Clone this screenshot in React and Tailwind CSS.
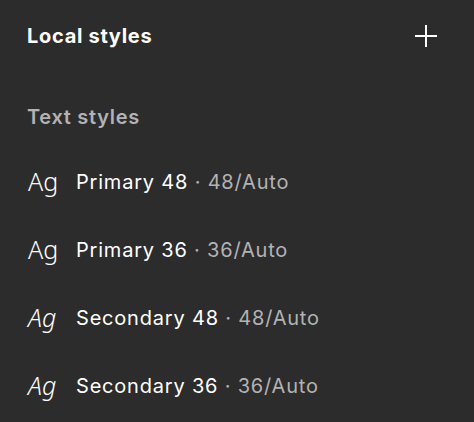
import React from 'react';

const styles = [
  { name: 'Primary 48', meta: '48/Auto', italic: false },
  { name: 'Primary 36', meta: '36/Auto', italic: false },
  { name: 'Secondary 48', meta: '48/Auto', italic: true },
  { name: 'Secondary 36', meta: '36/Auto', italic: true },
];

const StyleRow = ({ item }) => (
  <div className="flex items-center h-[68px]">
    <span
      className={`w-[49px] -mt-[3px] pl-px text-[25px] leading-[28px] font-light text-white ${item.italic ? 'italic' : ''}`}
      style={{ fontFamily: '"Noto Sans", sans-serif' }}
    >
      Ag
    </span>
    <span className="text-[20px] leading-[28px] tracking-[0.8px] text-white">
      {item.name}
      <span className="text-[#b3b3b3]"> · {item.meta}</span>
    </span>
  </div>
);

export default function App() {
  return (
    <div
      className="w-full h-[422px] bg-[#2c2c2c] px-[27px] overflow-hidden"
      style={{ fontFamily: 'Inter, "Liberation Sans", sans-serif' }}
    >
      {/* Header */}
      <div className="flex items-center justify-between h-[72px]">
        <h2 className="text-[20px] leading-[28px] tracking-[0.7px] font-bold text-white">Local styles</h2>
        <button className="w-[22px] h-[22px] mr-[10px] text-white">
          <svg width="22" height="22" viewBox="0 0 22 22" fill="none" stroke="currentColor" strokeWidth="2">
            <path d="M11 0V22M0 11H22" />
          </svg>
        </button>
      </div>

      {/* Section */}
      <div className="mt-[31px] text-[20px] leading-[28px] tracking-[0.7px] font-semibold text-[#b3b3b3]">
        Text styles
      </div>

      <div className="mt-[17px] flex flex-col">
        {styles.map((s) => (
          <StyleRow key={s.name} item={s} />
        ))}
      </div>
    </div>
  );
}
